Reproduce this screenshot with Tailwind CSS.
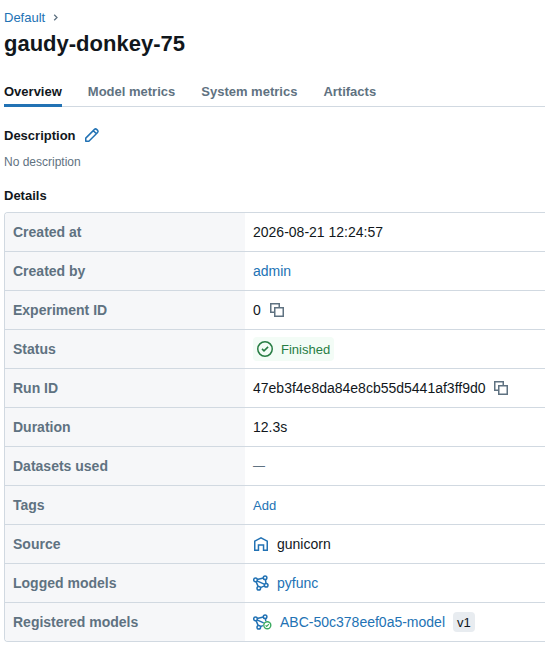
<!DOCTYPE html>
<html lang="en">
<head>
<meta charset="utf-8">
<title>gaudy-donkey-75</title>
<script src="https://cdn.jsdelivr.net/npm/@tailwindcss/browser@4"></script>
</head>
<body class="h-[661px] overflow-hidden bg-white font-['Liberation_Sans',Arial,sans-serif] text-[13px] leading-5 text-[#11171c]">
<svg class="hidden">
  <symbol id="copy" viewBox="0 0 16 16"><path fill="none" stroke="currentColor" stroke-width="1.5" d="M5.75 10.25h-4v-8.5h8.5v4M5.75 5.75h8.5v8.5h-8.5z"/></symbol>
  <symbol id="models" viewBox="0 0 16 16"><g fill="none" stroke="currentColor" stroke-width="1.5"><circle cx="2.5" cy="4.9" r="1.8"/><circle cx="12.1" cy="2.7" r="1.8"/><circle cx="13.2" cy="10.3" r="1.8"/><circle cx="5.8" cy="13.3" r="1.8"/><path d="M4.2 4.6l6.2-1.5M4 5.9l7.7 3.5M3.1 6.6l2.1 5M12.4 4.4l.6 4.1M7.4 12.6l4.2-1.7"/></g></symbol>
</svg>
<main class="pl-1">
  <nav class="flex h-[27px] items-center pt-[8px]"><a class="text-[#2272b4]">Default</a>
    <svg class="ml-[5px] size-3 text-[#5f7281]" viewBox="0 0 12 12"><path fill="none" stroke="currentColor" stroke-width="1.3" d="M4.2 2.7l2.8 2.8-2.8 2.8"/></svg>
  </nav>
  <h1 class="mt-[3px] text-[22px] leading-7 font-bold">gaudy-donkey-75</h1>
  <div class="mt-[19px] flex h-[30px] gap-[26px] border-b border-[#d1d9e1] font-bold text-[#5f7281]">
    <span class="mb-[-1px] h-[30px] border-b-3 border-[#2272b4] pt-[5px] text-[#11171c]">Overview</span>
    <span class="pt-[5px]">Model metrics</span>
    <span class="pt-[5px]">System metrics</span>
    <span class="pt-[5px]">Artifacts</span>
  </div>
  <h2 class="mt-[19px] flex h-5 items-center font-bold">Description
    <svg class="mb-[2px] ml-[8px] size-4 text-[#2272b4]" viewBox="0 0 16 16"><path fill="none" stroke="currentColor" stroke-width="1.5" stroke-linejoin="round" d="M1.75 14.25v-3.1L10.5 2.4a1.5 1.5 0 0 1 2.1 0l1 1a1.5 1.5 0 0 1 0 2.1L4.85 14.25zM9.3 3.6L12.4 6.7"/></svg>
  </h2>
  <p class="mt-[6px] text-xs leading-5 text-[#5f7281]">No description</p>
  <h2 class="mt-[14px] font-bold">Details</h2>
  <dl class="mt-[6px] grid h-[430px] grid-cols-[240px_1fr] grid-rows-[repeat(11,39px)] overflow-hidden rounded-l border-y border-l border-[#d1d9e1] text-[14px] [&>dd]:flex [&>dd]:items-center [&>dd]:border-b [&>dd]:border-[#d1d9e1] [&>dd]:pl-2 [&>dt]:flex [&>dt]:items-center [&>dt]:border-b [&>dt]:border-[#d1d9e1] [&>dt]:bg-[#f6f7f9] [&>dt]:pl-2 [&>dt]:font-bold [&>dt]:text-[#5f7281]">
    <dt>Created at</dt><dd>2026-08-21 12:24:57</dd>
    <dt>Created by</dt><dd class="text-[#2272b4]">admin</dd>
    <dt>Experiment ID</dt><dd>0<svg class="ml-[8px] size-4 text-[#5f7281]"><use href="#copy"/></svg></dd>
    <dt>Status</dt><dd><span class="flex h-6 items-center rounded bg-[#f3fcf6] px-1 text-[13px] text-[#277c43]"><svg class="mr-2 size-4" viewBox="0 0 16 16"><g fill="none" stroke="currentColor" stroke-width="1.5"><circle cx="8" cy="8" r="7.25"/><path d="M5 7.9l2 2L11.1 5.9"/></g></svg><span class="pt-[2px]">Finished</span></span></dd>
    <dt>Run ID</dt><dd>47eb3f4e8da84e8cb55d5441af3ff9d0<svg class="ml-[7px] size-4 text-[#5f7281]"><use href="#copy"/></svg></dd>
    <dt>Duration</dt><dd>12.3s</dd>
    <dt>Datasets used</dt><dd class="text-xs text-[#5f7281]">—</dd>
    <dt>Tags</dt><dd class="pt-[2px] text-[13px] text-[#2272b4]">Add</dd>
    <dt>Source</dt><dd><svg class="mr-2 size-4 text-[#2272b4]" viewBox="0 0 16 16"><path fill="none" stroke="currentColor" stroke-width="1.5" d="M1.75 14.25V5.1L8 1.8l6.25 3.3v9.15h-3.7V9.1h-5.1v5.15z"/></svg>gunicorn</dd>
    <dt>Logged models</dt><dd class="text-[#2272b4]"><svg class="mr-2 size-4"><use href="#models"/></svg>pyfunc</dd>
    <dt>Registered models</dt><dd><svg class="mr-2 h-4 w-[19px] text-[#2272b4]" viewBox="0 0 19 16"><use href="#models" width="16" height="16"/><circle cx="14.3" cy="11.2" r="4.4" fill="white"/><circle cx="14.3" cy="11.2" r="3.5" fill="white" stroke="#3caa60" stroke-width="1.4"/><path d="M12.6 11.3l1.1 1.1 2.2-2.2" fill="none" stroke="#3caa60" stroke-width="1.2"/></svg><a class="text-[#2272b4]">ABC-50c378eef0a5-model</a><span class="ml-2 h-5 rounded bg-[#e8ecf0] px-1 pt-px text-[13px] leading-5">v1</span></dd>
  </dl>
</main>
</body>
</html>
